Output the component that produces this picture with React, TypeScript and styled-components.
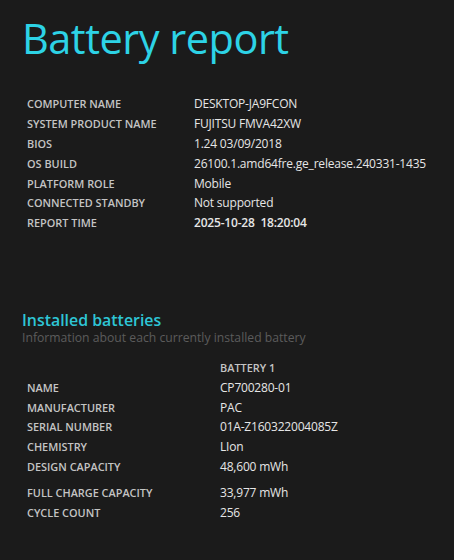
import React from "react";
import styled, { createGlobalStyle } from "styled-components";

const Global = createGlobalStyle`
  html, body { margin: 0; padding: 0; background: #1b1b1b; }
  body { font-family: "Open Sans", "Noto Sans", sans-serif; }
`;

const Page = styled.div`
  width: 454px;
  height: 560px;
  background: #1b1b1b;
  overflow: hidden;
  display: flex;
  flex-direction: column;
`;

const Title = styled.h1`
  margin: 12px 0 0 22px;
  font-size: 41.5px;
  line-height: 52px;
  font-weight: 400;
  color: #2dd3e6;
  letter-spacing: -0.5px;
`;

const InfoTable = styled.div<{ $valueX: number; $top: number }>`
  display: grid;
  grid-template-columns: ${(p) => p.$valueX - 27}px 1fr;
  grid-auto-rows: 19.8px;
  align-items: center;
  margin: ${(p) => p.$top}px 0 0 27px;
`;

const Label = styled.div`
  font-size: 10.9px;
  font-weight: 600;
  color: #c4c4c4;
  white-space: nowrap;
`;

const Value = styled.div<{ $bold?: boolean }>`
  font-size: 12px;
  font-weight: ${(p) => (p.$bold ? 600 : 400)};
  color: #e6e6e6;
  white-space: pre;
  letter-spacing: -0.2px;
`;

const Spacer = styled.div<{ $h: number }>`
  height: ${(p) => p.$h}px;
`;

const SectionHeading = styled.h2`
  margin: 0 0 0 22px;
  font-size: 15.9px;
  line-height: 20px;
  font-weight: 600;
  color: #2ec6d6;
`;

const Subtitle = styled.div`
  margin-left: 22px;
  font-size: 12.2px;
  line-height: 16px;
  color: #5c5c5c;
`;

const ColumnHead = styled(Label)`
  grid-column: 2;
`;

const Row = styled.div`
  display: contents;
`;

const info: [string, string, boolean?][] = [
  ["COMPUTER NAME", "DESKTOP-JA9FCON"],
  ["SYSTEM PRODUCT NAME", "FUJITSU FMVA42XW"],
  ["BIOS", "1.24 03/09/2018"],
  ["OS BUILD", "26100.1.amd64fre.ge_release.240331-1435"],
  ["PLATFORM ROLE", "Mobile"],
  ["CONNECTED STANDBY", "Not supported"],
  ["REPORT TIME", "2025-10-28  18:20:04", true],
];

const battery: [string, string][] = [
  ["NAME", "CP700280-01"],
  ["MANUFACTURER", "PAC"],
  ["SERIAL NUMBER", "01A-Z160322004085Z"],
  ["CHEMISTRY", "LIon"],
  ["DESIGN CAPACITY", "48,600 mWh"],
];

const battery2: [string, string][] = [
  ["FULL CHARGE CAPACITY", "33,977 mWh"],
  ["CYCLE COUNT", "256"],
];

export default function App() {
  return (
    <Page>
      <Global />
      <Title>Battery report</Title>
      <InfoTable $valueX={194} $top={30}>
        {info.map(([l, v, b]) => (
          <Row key={l}>
            <Label>{l}</Label>
            <Value $bold={b}>{v}</Value>
          </Row>
        ))}
      </InfoTable>
      <Spacer $h={77} />
      <SectionHeading>Installed batteries</SectionHeading>
      <Subtitle>Information about each currently installed battery</Subtitle>
      <InfoTable $valueX={220} $top={12}>
        <ColumnHead>BATTERY 1</ColumnHead>
        {battery.map(([l, v]) => (
          <Row key={l}>
            <Label>{l}</Label>
            <Value>{v}</Value>
          </Row>
        ))}
      </InfoTable>
      <InfoTable $valueX={220} $top={6}>
        {battery2.map(([l, v]) => (
          <Row key={l}>
            <Label>{l}</Label>
            <Value>{v}</Value>
          </Row>
        ))}
      </InfoTable>
    </Page>
  );
}
